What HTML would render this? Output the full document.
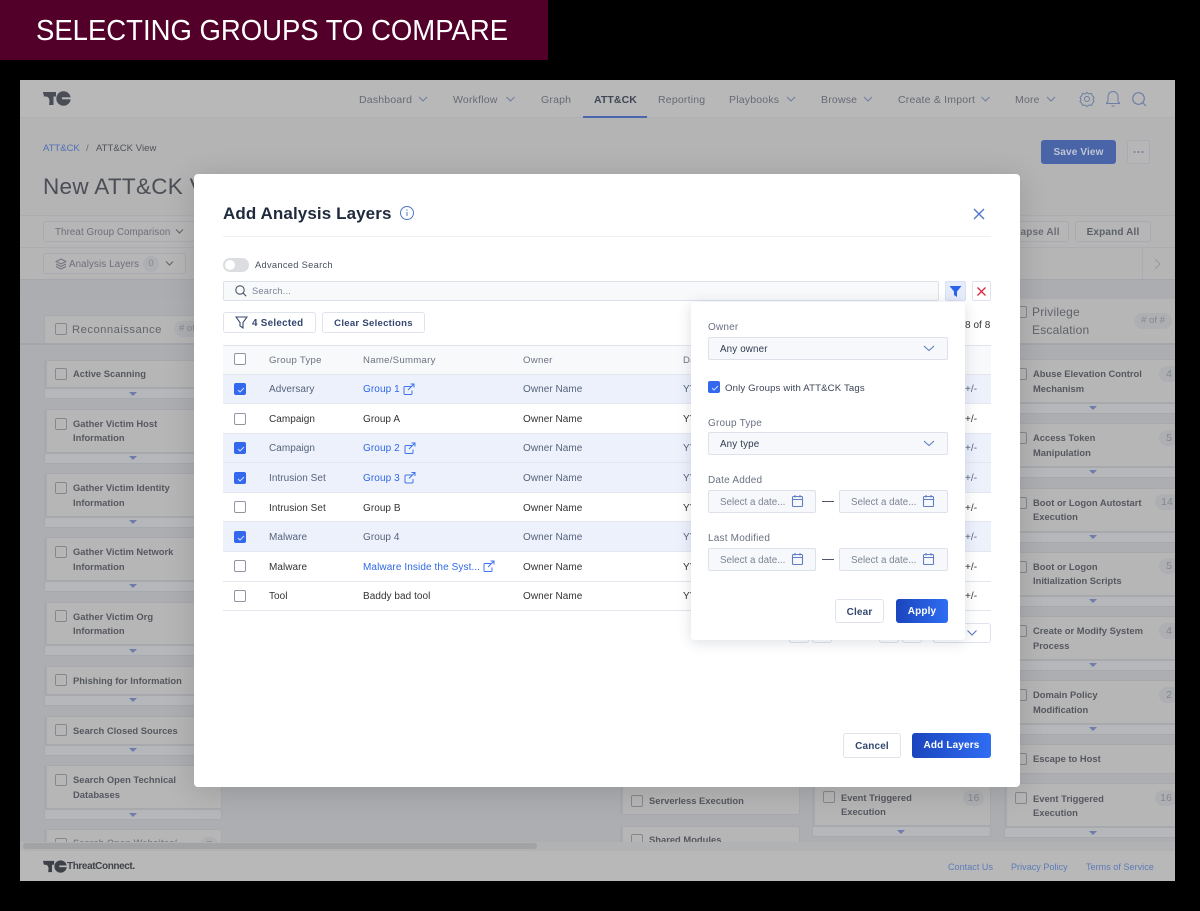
<!DOCTYPE html>
<html><head><meta charset="utf-8"><title>Selecting Groups to Compare</title>
<style>
*{box-sizing:border-box}
html,body{margin:0;padding:0;background:#000;width:1200px;height:911px;overflow:hidden;font-family:"Liberation Sans",sans-serif}
div,span,a,svg{position:absolute}
.t{white-space:nowrap;line-height:14px;font-size:10px;letter-spacing:.05px;color:#333;margin-top:1px}
.b{font-weight:bold}
.nav{font-size:10.5px;letter-spacing:.2px;color:#666a73;top:92px}
.card{background:#b6b6b6;border:1px solid #a7a9ad;border-left-width:3px;border-radius:2px}
.strip{background:#b6b7ba;border:1px solid #a7a9ae;border-radius:2px}
.ct{font-size:9.4px;font-weight:bold;color:#55585f;line-height:14.5px;white-space:normal;letter-spacing:0}
.cb{border:1px solid #85888f;border-radius:2px;width:12px;height:12px}
.num{background:#adafb2;border-radius:9px;color:#84878d;font-size:10.5px;text-align:center;line-height:16px;height:16px}
.tri{width:0;height:0;border-left:4px solid transparent;border-right:4px solid transparent;border-top:4px solid #6d7ca8}
.row{left:223px;width:768px;border-bottom:1px solid #e3e6ee}
.sel{background:#edf1fc}
.ck{left:234px;width:12px;height:12px;border:1px solid #8f95a3;border-radius:2px;background:#fff}
.ck.on{background:#3368ee;border-color:#3368ee}
.ck.on svg{left:1px;top:1px}
.lk{color:#2f68e6;letter-spacing:.1px}
.mu{color:#56637b}
.lab{font-size:10px;color:#6a7182;left:708px;letter-spacing:.2px}
.inp{background:#f7f8fb;border:1px solid #dde1ea;border-radius:2px}
.btn{background:#fff;border:1px solid #dfe3ec;border-radius:3px;color:#33476f;font-weight:bold;font-size:10px;text-align:center;letter-spacing:.15px;white-space:nowrap}
.pri{background:linear-gradient(90deg,#1a45bd,#2f6df3);border:0;color:#fff}
.ph{color:#7b8394;font-size:9.8px;letter-spacing:0}
</style></head>
<body>
<div style="left:0;top:0;width:548px;height:60px;background:#52002a"></div>
<span class="t" style="left:36px;top:11px;line-height:38px;font-size:29px;letter-spacing:0;color:#fff;transform:scaleX(.948);transform-origin:0 50%">SELECTING GROUPS TO COMPARE</span>

<div id="app" style="left:20px;top:80px;width:1155px;height:801px;background:#acaeb2;overflow:hidden"></div>
<!-- top -->
<div style="left:20px;top:80px;width:1155px;height:38px;background:#b8b8b8;border-bottom:1px solid #b0b0b1"></div>
<div style="left:20px;top:118px;width:1155px;height:97px;background:#b4b4b5"></div>
<div style="left:20px;top:215px;width:1155px;height:65px;background:#b5b5b6;border-top:1px solid #acadaf;border-bottom:1px solid #a5a7ac"></div>
<div style="left:20px;top:247px;width:1155px;height:1px;background:#acadaf"></div>

<svg style="left:43px;top:91px" width="28" height="15" viewBox="0 0 28 15"><circle cx="20.500" cy="7.500" r="7.200" fill="#4a4d55"/><rect x="19" y="6.300" width="9" height="2" fill="#b8b8b8"/><path d="M10 0h4C12.500 3 12 9 14 15H10V14z" fill="#b8b8b8"/><path d="M0 1h13v4.500H10.500V14H6C7 9 6.500 6 3 5.500H1z" fill="#4a4d55"/></svg>
<span class="t nav" style="left:359px">Dashboard</span>
<span class="t nav" style="left:453px">Workflow</span>
<span class="t nav" style="left:541px">Graph</span>
<span class="t nav" style="left:594px;color:#3f4654;font-weight:bold;letter-spacing:.1px">ATT&amp;CK</span>
<span class="t nav" style="left:658px">Reporting</span>
<span class="t nav" style="left:729px">Playbooks</span>
<span class="t nav" style="left:821px">Browse</span>
<span class="t nav" style="left:898px">Create &amp; Import</span>
<span class="t nav" style="left:1015px">More</span>
<div style="left:583px;top:115.500px;width:64px;height:2.500px;background:#4a66ae"></div>
<svg style="left:0;top:0" width="1200" height="120" fill="none" stroke="#6e7ea3" stroke-width="1">
<path d="M419 97l4 4 4-4M506.500 97l4 4 4-4M787 97l4 4 4-4M864 97l4 4 4-4M981.500 97l4 4 4-4M1047 97l4 4 4-4"/>
<circle cx="1087" cy="99" r="2.500"/><path d="M1087 92.500l2 1.500 2.500-.5 1 2.500 1.500 1.500-1 2 1 2-1.500 1.500-1 2.300-2.500-.3-2 1.500-2-1.500-2.500.3-1-2.300-1.500-1.500 1-2-1-2 1.500-1.500 1-2.500 2.500.5z"/>
<path d="M1106.500 103.500v-.5l1.500-1.500v-5a5 5 0 0 1 10 0v5l1.500 1.500v.5zM1111.500 106h3"/>
<circle cx="1138.500" cy="98.500" r="5.800" stroke-width="1.200"/><path d="M1143 103l3 3" stroke-width="1.200"/>
</svg>

<span class="t" style="left:43px;top:141px;font-size:9.500px;color:#4f6fb6;letter-spacing:0">ATT&amp;CK</span>
<span class="t" style="left:86px;top:141px;font-size:9.500px;color:#65686f">/</span>
<span class="t" style="left:96px;top:141px;font-size:9.500px;color:#4f5257">ATT&amp;CK View</span>
<span class="t" style="left:43px;top:172px;line-height:28px;font-size:22.500px;color:#4b4e55;letter-spacing:.3px">New ATT&amp;CK V</span>
<div class="btn pri" style="left:1041px;top:140px;width:75px;height:24px;line-height:25px;background:#4a64a8;color:#c0c6d6">Save View</div>
<div class="btn" style="left:1127px;top:140px;width:23px;height:24px;background:#b6b6b7;border-color:#a8abb1"></div>
<svg style="left:1127px;top:140px" width="23" height="24" fill="#6e7ea3"><circle cx="7.500" cy="12" r="1"/><circle cx="11.500" cy="12" r="1"/><circle cx="15.500" cy="12" r="1"/></svg>

<div class="btn" style="left:43px;top:221px;width:152px;height:21px;background:#b6b6b7;border-color:#a7aab0"></div>
<span class="t" style="left:55px;top:225px;font-size:9.800px;color:#6d7078;letter-spacing:.07px">Threat Group Comparison</span>
<svg style="left:175px;top:228px" width="10" height="8" fill="none" stroke="#5e6168"><path d="M1 1.500l3.500 3.500 3.500-3.500"/></svg>
<div class="btn" style="left:43px;top:253px;width:143px;height:21px;background:#b6b6b7;border-color:#a7aab0"></div>
<svg style="left:55px;top:258px" width="12" height="12" fill="none" stroke="#6f7279"><path d="M6 1l5 2.500-5 2.500-5-2.500zM1 6l5 2.500 5-2.500M1 8.500l5 2.500 5-2.500"/></svg>
<span class="t" style="left:69px;top:257px;font-size:9.800px;color:#6d7078;letter-spacing:.1px">Analysis Layers</span>
<div class="num" style="left:143px;top:256px;width:16px;font-size:9.500px">0</div>
<svg style="left:165px;top:260px" width="10" height="8" fill="none" stroke="#5e6168"><path d="M1 1.500l3.500 3.500 3.500-3.500"/></svg>
<div class="btn" style="left:1000px;top:221px;width:69px;height:21px;background:#b6b6b7;border-color:#a7aab0;color:#6a6d75;line-height:21px;padding-right:10px;text-align:right">Collapse All</div>
<div class="btn" style="left:1075px;top:221px;width:76px;height:21px;background:#b6b6b7;border-color:#a7aab0;color:#5c6068;line-height:21px">Expand All</div>
<div style="left:1142px;top:248px;width:1px;height:31px;background:#acadaf"></div>
<svg style="left:1153px;top:257px" width="10" height="14" fill="none" stroke="#97999e" stroke-width="1.200"><path d="M2 2l5 5-5 5"/></svg>

<!-- column header row -->
<div style="left:20px;top:280px;width:1155px;height:18px;background:#abadb1"></div>
<div style="left:20px;top:343px;width:1155px;height:2px;background:#a4a6ac"></div>
<div class="card" style="left:44px;top:315px;width:160px;height:28px;border-left-width:1px;border-bottom:0"></div>
<div class="cb" style="left:55px;top:323px"></div>
<span class="t" style="left:72px;top:322px;font-size:11.300px;color:#62656c;letter-spacing:.45px">Reconnaissance</span>
<div class="num" style="left:174px;top:321px;width:40px;text-align:left;padding-left:5px;font-size:9.500px"># of</div>
<div style="left:1000px;top:299px;width:175px;height:44px;background:#b6b6b6"></div>
<div class="cb" style="left:1015px;top:306px"></div>
<span class="t" style="left:1032px;top:303px;font-size:12px;line-height:17.500px;white-space:normal;width:90px;color:#60636a;letter-spacing:.2px">Privilege Escalation</span>
<div class="num" style="left:1134px;top:313px;width:38px;height:16px;font-size:9.500px"># of #</div>

<!-- left column cards -->
<div class="strip" style="left:44px;top:388px;width:178px;height:11px"></div><div class="card" style="left:44px;top:360px;width:178px;height:28px"></div><div class="cb" style="left:55px;top:368px"></div><span class="t ct" style="left:73px;top:366px">Active Scanning</span><div class="tri" style="left:129px;top:392px"></div>
<div class="strip" style="left:44px;top:453px;width:178px;height:11px"></div><div class="card" style="left:44px;top:409px;width:178px;height:44px"></div><div class="cb" style="left:55px;top:418px"></div><span class="t ct" style="left:73px;top:415.500px;width:120px">Gather Victim Host Information</span><div class="tri" style="left:129px;top:456px"></div>
<div class="strip" style="left:44px;top:517px;width:178px;height:11px"></div><div class="card" style="left:44px;top:473px;width:178px;height:44px"></div><div class="cb" style="left:55px;top:482px"></div><span class="t ct" style="left:73px;top:480px;width:120px">Gather Victim Identity Information</span><div class="tri" style="left:129px;top:520px"></div>
<div class="strip" style="left:44px;top:581px;width:178px;height:11px"></div><div class="card" style="left:44px;top:537px;width:178px;height:44px"></div><div class="cb" style="left:55px;top:546px"></div><span class="t ct" style="left:73px;top:544px;width:120px">Gather Victim Network Information</span><div class="tri" style="left:129px;top:584px"></div>
<div class="strip" style="left:44px;top:645px;width:178px;height:11px"></div><div class="card" style="left:44px;top:602px;width:178px;height:43px"></div><div class="cb" style="left:55px;top:610px"></div><span class="t ct" style="left:73px;top:608.500px;width:120px">Gather Victim Org Information</span><div class="tri" style="left:129px;top:649px"></div>
<div class="strip" style="left:44px;top:695px;width:178px;height:11px"></div><div class="card" style="left:44px;top:666px;width:178px;height:29px"></div><div class="cb" style="left:55px;top:674px"></div><span class="t ct" style="left:73px;top:672.500px">Phishing for Information</span><div class="tri" style="left:129px;top:698px"></div>
<div class="strip" style="left:44px;top:745px;width:178px;height:11px"></div><div class="card" style="left:44px;top:716px;width:178px;height:29px"></div><div class="cb" style="left:55px;top:724px"></div><span class="t ct" style="left:73px;top:722.500px">Search Closed Sources</span><div class="tri" style="left:129px;top:748px"></div>
<div class="strip" style="left:44px;top:809px;width:178px;height:11px"></div><div class="card" style="left:44px;top:765px;width:178px;height:44px"></div><div class="cb" style="left:55px;top:774px"></div><span class="t ct" style="left:73px;top:772px;width:120px">Search Open Technical Databases</span><div class="tri" style="left:129px;top:813px"></div>
<div class="card" style="left:44px;top:829px;width:178px;height:22px"></div><div class="cb" style="left:55px;top:838px"></div><span class="t ct" style="left:73px;top:835px;opacity:.6">Search Open Websites/<br>Domains</span><div class="num" style="left:200px;top:837px;width:18px">7</div>

<!-- mid columns -->
<div class="card" style="left:620px;top:780px;width:180px;height:35px"></div><div class="cb" style="left:631px;top:795px"></div><span class="t ct" style="left:649px;top:793px">Serverless Execution</span>
<div class="card" style="left:620px;top:826px;width:180px;height:25px"></div><div class="cb" style="left:631px;top:834px"></div><span class="t ct" style="left:649px;top:832px">Shared Modules</span>
<div class="strip" style="left:812px;top:826px;width:179px;height:11px"></div><div class="card" style="left:812px;top:780px;width:179px;height:46px"></div><div class="cb" style="left:823px;top:791px"></div><span class="t ct" style="left:841px;top:789.500px;width:100px">Event Triggered Execution</span><div class="num" style="left:963px;top:790px;width:21px">16</div><div class="tri" style="left:897px;top:830px"></div>
<div class="card" style="left:812px;top:850px;width:179px;height:2px"></div>

<!-- right column -->
<div class="strip" style="left:1004px;top:403px;width:175px;height:11px"></div><div class="card" style="left:1004px;top:359px;width:175px;height:44px"></div><div class="cb" style="left:1015px;top:368px"></div><span class="t ct" style="left:1033px;top:366px;width:120px">Abuse Elevation Control Mechanism</span><div class="num" style="left:1159px;top:366px;width:20px">4</div><div class="tri" style="left:1089px;top:406px"></div>
<div class="strip" style="left:1004px;top:467px;width:175px;height:11px"></div><div class="card" style="left:1004px;top:423px;width:175px;height:44px"></div><div class="cb" style="left:1015px;top:432px"></div><span class="t ct" style="left:1033px;top:430px;width:120px">Access Token Manipulation</span><div class="num" style="left:1159px;top:430px;width:20px">5</div><div class="tri" style="left:1089px;top:470px"></div>
<div class="strip" style="left:1004px;top:532px;width:175px;height:11px"></div><div class="card" style="left:1004px;top:488px;width:175px;height:44px"></div><div class="cb" style="left:1015px;top:497px"></div><span class="t ct" style="left:1033px;top:494.500px;width:125px">Boot or Logon Autostart Execution</span><div class="num" style="left:1155px;top:494px;width:24px">14</div><div class="tri" style="left:1089px;top:535px"></div>
<div class="strip" style="left:1004px;top:596px;width:175px;height:11px"></div><div class="card" style="left:1004px;top:552px;width:175px;height:44px"></div><div class="cb" style="left:1015px;top:561px"></div><span class="t ct" style="left:1033px;top:558.500px;width:120px">Boot or Logon Initialization Scripts</span><div class="num" style="left:1159px;top:558px;width:20px">5</div><div class="tri" style="left:1089px;top:599px"></div>
<div class="strip" style="left:1004px;top:660px;width:175px;height:11px"></div><div class="card" style="left:1004px;top:616px;width:175px;height:44px"></div><div class="cb" style="left:1015px;top:625px"></div><span class="t ct" style="left:1033px;top:623px;width:125px">Create or Modify System Process</span><div class="num" style="left:1159px;top:623px;width:20px">4</div><div class="tri" style="left:1089px;top:663px"></div>
<div class="strip" style="left:1004px;top:724px;width:175px;height:11px"></div><div class="card" style="left:1004px;top:680px;width:175px;height:44px"></div><div class="cb" style="left:1015px;top:689px"></div><span class="t ct" style="left:1033px;top:687px;width:120px">Domain Policy Modification</span><div class="num" style="left:1159px;top:687px;width:20px">2</div><div class="tri" style="left:1089px;top:727px"></div>
<div class="card" style="left:1004px;top:744px;width:175px;height:30px"></div><div class="cb" style="left:1015px;top:753px"></div><span class="t ct" style="left:1033px;top:751px">Escape to Host</span>
<div class="strip" style="left:1004px;top:827px;width:175px;height:11px"></div><div class="card" style="left:1004px;top:783px;width:175px;height:44px"></div><div class="cb" style="left:1015px;top:792px"></div><span class="t ct" style="left:1033px;top:790.500px;width:100px">Event Triggered Execution</span><div class="num" style="left:1155px;top:790px;width:22px">16</div><div class="tri" style="left:1089px;top:831px"></div>

<!-- scrollbar + footer -->
<div style="left:20px;top:842px;width:1155px;height:9px;background:#b1b2b4"></div>
<div style="left:23px;top:843px;width:514px;height:6px;background:#a2a3a5;border-radius:3px"></div>
<div style="left:20px;top:851px;width:1155px;height:30px;background:#b8b8b8"></div>
<svg style="left:43px;top:860px" width="24" height="13" viewBox="0 0 28 15"><circle cx="20.500" cy="7.500" r="7.200" fill="#3d4047"/><rect x="19" y="6.300" width="9" height="2" fill="#b8b8b8"/><path d="M10 0h4C12.500 3 12 9 14 15H10V14z" fill="#b8b8b8"/><path d="M0 1h13v4.500H10.500V14H6C7 9 6.500 6 3 5.500H1z" fill="#3d4047"/></svg>
<span class="t" style="left:67px;top:859px;font-size:10px;letter-spacing:-.4px;color:#404349;font-weight:bold">ThreatConnect.</span>
<span class="t" style="left:948px;top:859px;font-size:9px;color:#5d7ab8">Contact Us</span>
<span class="t" style="left:1011px;top:859px;font-size:9px;color:#5d7ab8">Privacy Policy</span>
<span class="t" style="left:1086px;top:859px;font-size:9px;color:#5d7ab8">Terms of Service</span>

<!-- clip right of app -->
<div style="left:1175px;top:80px;width:25px;height:831px;background:#000"></div>

<!-- modal -->
<div style="left:194px;top:174px;width:826px;height:613px;background:#fff;border-radius:4px;box-shadow:0 4px 30px rgba(0,0,0,.15)"></div>
<span class="t" style="left:223px;top:203px;line-height:20px;font-size:17px;font-weight:bold;color:#1f2a3d;letter-spacing:.1px">Add Analysis Layers</span>
<svg style="left:399px;top:205px" width="16" height="16" fill="none" stroke="#4f78c8"><circle cx="8" cy="8" r="6.500"/><path d="M8 7v4M8 4.500v1.200"/></svg>
<svg style="left:972px;top:207px" width="14" height="14" fill="none" stroke="#4f78c8" stroke-width="1.400"><path d="M2 2l10 10M12 2L2 12"/></svg>
<div style="left:223px;top:236px;width:768px;height:1px;background:#eef0f4"></div>
<div style="left:223px;top:258px;width:26px;height:14px;border-radius:7px;background:#dcdde0"></div>
<div style="left:225px;top:260px;width:10px;height:10px;border-radius:5px;background:#fff"></div>
<span class="t" style="left:255px;top:257px;font-size:9.300px;color:#47505f;letter-spacing:.3px">Advanced Search</span>
<div class="inp" style="left:223px;top:281px;width:716px;height:20px;background:#f8f9fb"></div>
<svg style="left:234px;top:284px" width="14" height="14" fill="none" stroke="#4c5568" stroke-width="1.100"><circle cx="6" cy="6" r="4.200"/><path d="M9.200 9.200l3 3"/></svg>
<span class="t ph" style="left:252px;top:283px;font-size:9.300px;letter-spacing:.2px">Search...</span>
<div style="left:945px;top:281px;width:21px;height:20px;background:#e6ecfb;border:1px solid #d9e0f2;border-radius:2px"></div>
<svg style="left:949px;top:285px" width="13" height="13"><path d="M.5 1h12L8 6.500V12L5 10V6.500z" fill="#2a63e8"/></svg>
<div style="left:972px;top:281px;width:19px;height:20px;background:#fff;border:1px solid #dfe3ec;border-radius:2px"></div>
<svg style="left:976px;top:286px" width="11" height="11" fill="none" stroke="#d9263c" stroke-width="1.300"><path d="M1.500 1.500l8 8M9.500 1.500l-8 8"/></svg>

<div class="btn" style="left:223px;top:312px;width:93px;height:21px"></div>
<svg style="left:235px;top:316px" width="13" height="13" fill="none" stroke="#3a4a6c" stroke-width="1.100"><path d="M1 1h11L8 6.500V12l-3-2V6.500z"/></svg>
<span class="t b" style="left:252px;top:316px;color:#33476f;font-size:9.800px;letter-spacing:.3px">4 Selected</span>
<div class="btn" style="left:322px;top:312px;width:103px;height:21px;line-height:21px;font-size:9.600px;letter-spacing:.25px">Clear Selections</div>
<span class="t" style="left:965px;top:318px">8 of 8</span>

<!-- table -->
<div style="left:223px;top:345px;width:768px;height:30px;background:#f8f9fb;border-top:1px solid #dfe3ec;border-bottom:1px solid #e3e6ee"></div>
<div class="ck" style="top:353px"></div>
<span class="t mu" style="left:269px;top:353px;font-size:9.600px;color:#6a7182;letter-spacing:.28px">Group Type</span>
<span class="t mu" style="left:363px;top:353px;font-size:9.600px;color:#6a7182;letter-spacing:.28px">Name/Summary</span>
<span class="t mu" style="left:523px;top:353px;font-size:9.600px;color:#6a7182;letter-spacing:.28px">Owner</span>
<span class="t mu" style="left:683px;top:353px;font-size:9.600px;color:#6a7182;letter-spacing:.28px">Date Added</span>

<div class="row sel" style="top:375px;height:29px"></div>
<div class="row" style="top:404px;height:30px"></div>
<div class="row sel" style="top:434px;height:29px"></div>
<div class="row sel" style="top:463px;height:30px"></div>
<div class="row" style="top:493px;height:29px"></div>
<div class="row sel" style="top:522px;height:30px"></div>
<div class="row" style="top:552px;height:30px"></div>
<div class="row" style="top:582px;height:29px"></div>

<div class="ck on" style="top:383px"><svg width="10" height="10" fill="none" stroke="#cfdcff"><path d="M2 5l2 2 4-4"/></svg></div>
<div class="ck" style="top:413px"></div>
<div class="ck on" style="top:442px"><svg width="10" height="10" fill="none" stroke="#cfdcff"><path d="M2 5l2 2 4-4"/></svg></div>
<div class="ck on" style="top:472px"><svg width="10" height="10" fill="none" stroke="#cfdcff"><path d="M2 5l2 2 4-4"/></svg></div>
<div class="ck" style="top:501px"></div>
<div class="ck on" style="top:531px"><svg width="10" height="10" fill="none" stroke="#cfdcff"><path d="M2 5l2 2 4-4"/></svg></div>
<div class="ck" style="top:560px"></div>
<div class="ck" style="top:590px"></div>

<span class="t mu" style="left:269px;top:382px">Adversary</span><span class="t lk" style="left:363px;top:382px">Group 1</span><span class="t mu" style="left:523px;top:382px">Owner Name</span><span class="t mu" style="left:683px;top:382px">YYYY</span><span class="t mu" style="left:965px;top:382px">+/-</span>
<span class="t" style="left:269px;top:412px">Campaign</span><span class="t" style="left:363px;top:412px">Group A</span><span class="t" style="left:523px;top:412px">Owner Name</span><span class="t" style="left:683px;top:412px">YYYY</span><span class="t" style="left:965px;top:412px">+/-</span>
<span class="t mu" style="left:269px;top:441px">Campaign</span><span class="t lk" style="left:363px;top:441px">Group 2</span><span class="t mu" style="left:523px;top:441px">Owner Name</span><span class="t mu" style="left:683px;top:441px">YYYY</span><span class="t mu" style="left:965px;top:441px">+/-</span>
<span class="t mu" style="left:269px;top:471px">Intrusion Set</span><span class="t lk" style="left:363px;top:471px">Group 3</span><span class="t mu" style="left:523px;top:471px">Owner Name</span><span class="t mu" style="left:683px;top:471px">YYYY</span><span class="t mu" style="left:965px;top:471px">+/-</span>
<span class="t" style="left:269px;top:500.500px">Intrusion Set</span><span class="t" style="left:363px;top:500.500px">Group B</span><span class="t" style="left:523px;top:500.500px">Owner Name</span><span class="t" style="left:683px;top:500.500px">YYYY</span><span class="t" style="left:965px;top:500.500px">+/-</span>
<span class="t mu" style="left:269px;top:530px">Malware</span><span class="t mu" style="left:363px;top:530px">Group 4</span><span class="t mu" style="left:523px;top:530px">Owner Name</span><span class="t mu" style="left:683px;top:530px">YYYY</span><span class="t mu" style="left:965px;top:530px">+/-</span>
<span class="t" style="left:269px;top:559.500px">Malware</span><span class="t lk" style="left:363px;top:559.500px">Malware Inside the Syst...</span><span class="t" style="left:523px;top:559.500px">Owner Name</span><span class="t" style="left:683px;top:559.500px">YYYY</span><span class="t" style="left:965px;top:559.500px">+/-</span>
<span class="t" style="left:269px;top:589px">Tool</span><span class="t" style="left:363px;top:589px">Baddy bad tool</span><span class="t" style="left:523px;top:589px">Owner Name</span><span class="t" style="left:683px;top:589px">YYYY</span><span class="t" style="left:965px;top:589px">+/-</span>

<svg style="left:0;top:0;width:1200px;height:911px;pointer-events:none" fill="none" stroke="#3f74e8" stroke-width="1">
<path d="M411 386.500h-6a1 1 0 0 0-1 1v6a1 1 0 0 0 1 1h6a1 1 0 0 0 1-1v-3M408 390l6-6M410.500 384h3.500v3.500"/>
<path d="M412 445.500h-6a1 1 0 0 0-1 1v6a1 1 0 0 0 1 1h6a1 1 0 0 0 1-1v-3M409 449l6-6M411.500 443h3.500v3.500"/>
<path d="M412 475h-6a1 1 0 0 0-1 1v6a1 1 0 0 0 1 1h6a1 1 0 0 0 1-1v-3M409 478.500l6-6M411.500 472.500h3.500v3.500"/>
<path d="M491 563.500h-6a1 1 0 0 0-1 1v6a1 1 0 0 0 1 1h6a1 1 0 0 0 1-1v-3M488 567l6-6M490.500 561h3.500v3.500"/>
</svg>

<!-- behind popover: pagination -->
<div class="btn" style="left:933px;top:623px;width:58px;height:20px"></div>
<svg style="left:966px;top:629px" width="12" height="9" fill="none" stroke="#5a78bd" stroke-width="1.100"><path d="M1.500 1.500l4.500 4.500 4.500-4.500"/></svg>
<div class="btn" style="left:789px;top:630px;width:20px;height:13px"></div>
<div class="btn" style="left:812px;top:630px;width:20px;height:13px"></div>
<div class="btn" style="left:879px;top:630px;width:20px;height:13px"></div>
<div class="btn" style="left:902px;top:630px;width:20px;height:13px"></div>

<!-- popover -->
<div style="left:691px;top:302px;width:274px;height:338px;background:#fff;border-radius:3px;box-shadow:0 2px 14px rgba(40,50,80,.16)"></div>
<span class="t lab" style="top:320px">Owner</span>
<div class="inp" style="left:708px;top:337px;width:240px;height:23px"></div>
<span class="t" style="left:720px;top:342px;color:#2f3a4d;font-size:9.800px;letter-spacing:.15px">Any owner</span>
<div class="ck on" style="left:708px;top:381px"><svg width="10" height="10" fill="none" stroke="#cfdcff"><path d="M2 5l2 2 4-4"/></svg></div>
<span class="t" style="left:725px;top:381px;color:#3b4456;font-size:9.600px;letter-spacing:.15px">Only Groups with ATT&amp;CK Tags</span>
<span class="t lab" style="top:416px">Group Type</span>
<div class="inp" style="left:708px;top:432px;width:240px;height:23px"></div>
<span class="t" style="left:720px;top:437px;color:#2f3a4d;font-size:9.800px;letter-spacing:.15px">Any type</span>
<span class="t lab" style="top:473px">Date Added</span>
<div class="inp" style="left:708px;top:490px;width:108px;height:23px"></div><div class="inp" style="left:839px;top:490px;width:109px;height:23px"></div>
<span class="t ph" style="left:720px;top:495px">Select a date...</span><span class="t ph" style="left:851px;top:495px">Select a date...</span>
<span class="t lab" style="top:531px">Last Modified</span>
<div class="inp" style="left:708px;top:548px;width:108px;height:23px"></div><div class="inp" style="left:839px;top:548px;width:109px;height:23px"></div>
<span class="t ph" style="left:720px;top:553px">Select a date...</span><span class="t ph" style="left:851px;top:553px">Select a date...</span>
<svg style="left:0;top:0;width:1200px;height:911px;pointer-events:none" fill="none" stroke="#5f7fc4" stroke-width="1.100">
<path d="M924 346l5 4.500 5-4.500M924 441l5 4.500 5-4.500"/>
<rect x="792.500" y="496.500" width="10" height="10" rx="1"/><path d="M792.500 499.500h10M795 495v2.500M800 495v2.500"/>
<rect x="923.500" y="496.500" width="10" height="10" rx="1"/><path d="M923.500 499.500h10M926 495v2.500M931 495v2.500"/>
<rect x="792.500" y="554.500" width="10" height="10" rx="1"/><path d="M792.500 557.500h10M795 553v2.500M800 553v2.500"/>
<rect x="923.500" y="554.500" width="10" height="10" rx="1"/><path d="M923.500 557.500h10M926 553v2.500M931 553v2.500"/>
<path d="M822 501.500h12M822 559.500h12" stroke="#4d5566"/>
</svg>
<div class="btn" style="left:835px;top:599px;width:49px;height:24px;line-height:25px">Clear</div>
<div class="btn pri" style="left:896px;top:599px;width:52px;height:24px;line-height:26px">Apply</div>

<div class="btn" style="left:843px;top:733px;width:58px;height:25px;line-height:25px">Cancel</div>
<div class="btn pri" style="left:912px;top:733px;width:79px;height:25px;line-height:26px">Add Layers</div>
</body></html>
